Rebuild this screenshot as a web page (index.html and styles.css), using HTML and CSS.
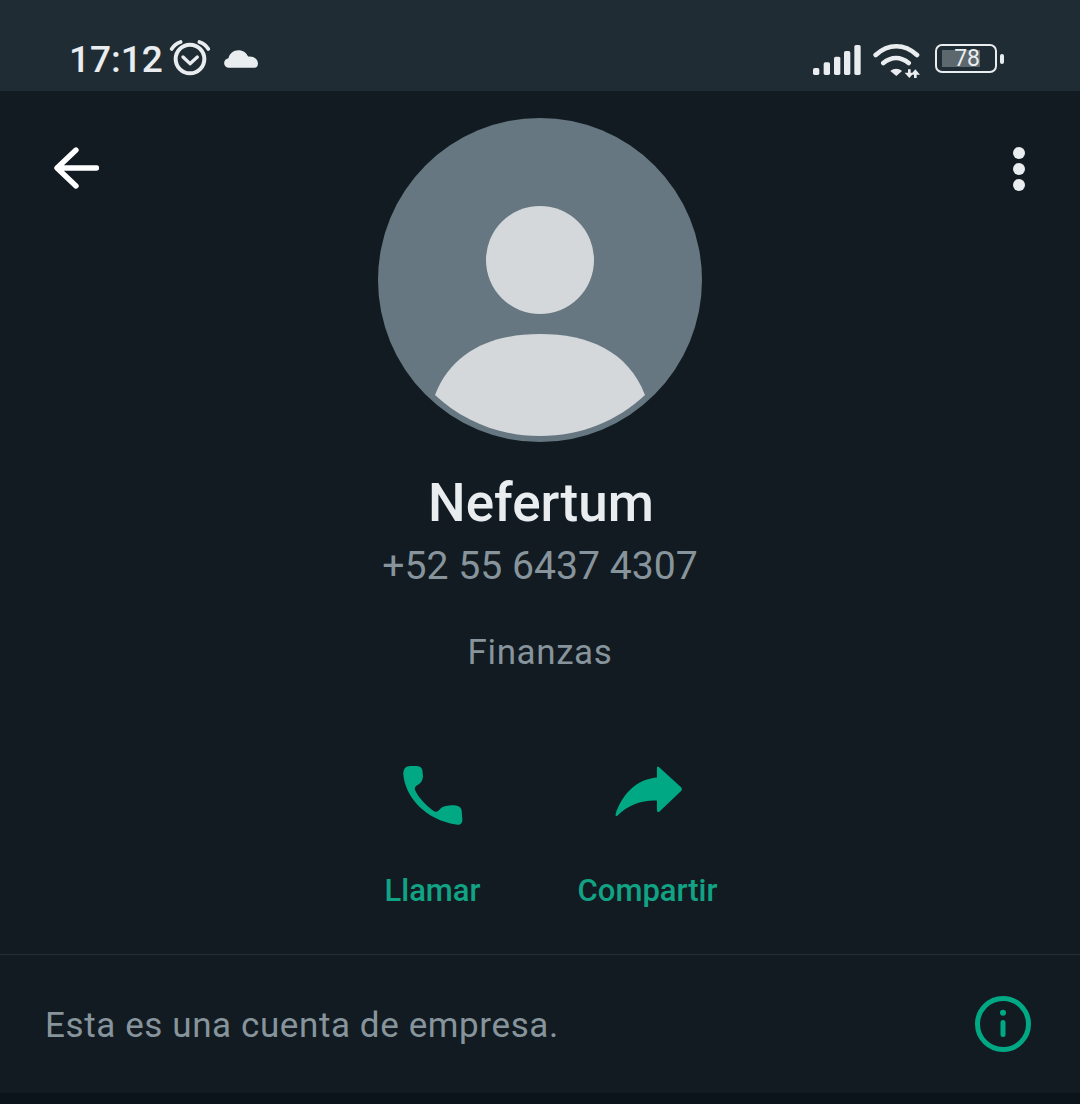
FILE: index.html
```html
<!DOCTYPE html>
<html lang="es">
<head>
  <meta charset="UTF-8" />
  <meta name="viewport" content="width=device-width, initial-scale=1.0"/>
  <title>Nefertum</title>
  <link rel="stylesheet" href="styles.css">
</head>
<body>

  <div class="status-bar">
    <div class="status-left">
      <span class="clock">17:12</span>
      <svg class="alarm" width="42" height="40" viewBox="385 58 126 120">
        <circle cx="448" cy="118" r="43" fill="none" stroke="#e9edef" stroke-width="12"/>
        <path d="M427 112l21 20 22-20" fill="none" stroke="#e9edef" stroke-width="10" stroke-linecap="round" stroke-linejoin="round"/>
        <path d="M393 88c6-10 15-17 27-21M476 67c12 4 21 11 27 21" fill="none" stroke="#e9edef" stroke-width="11" stroke-linecap="round"/>
      </svg>
      <svg class="cloud" width="34" height="20" viewBox="553 86 100 56">
        <path d="M568 140c-18 0-20-25-2-28 3-15 16-25 32-24 13 1 22 9 26 19 15-2 28 6 29 20 0 8-4 13-11 13z" fill="#e9edef"/>
      </svg>
    </div>
    <div class="status-right">
      <svg class="signal" width="50" height="32" viewBox="38 70 150 96">
        <rect x="41" y="142" width="19" height="21" rx="5" fill="#e9edef"/>
        <rect x="73" y="125" width="19" height="38" rx="5" fill="#e9edef"/>
        <rect x="104" y="108" width="19" height="55" rx="5" fill="#e9edef"/>
        <rect x="134" y="91" width="19" height="72" rx="5" fill="#e9edef"/>
        <rect x="165" y="73" width="19" height="90" rx="5" fill="#e9edef"/>
      </svg>
      <svg class="wifi" width="48" height="36" viewBox="218 64 144 108">
        <path d="M229 103c38-35 86-35 124 0M252 127c24-20 52-20 76 0" fill="none" stroke="#e9edef" stroke-width="14" stroke-linecap="round"/>
        <path d="M273 151c11-9 24-9 35 0l-17 15z" fill="#e9edef"/>
        <path d="M330 146v16M348 156v16" stroke="#e9edef" stroke-width="8"/>
        <path d="M316 156h28l-14 16zM334 162l14-16 14 16z" fill="#e9edef"/>
      </svg>
      <div class="battery">
        <div class="battery-body"><span>78</span></div>
        <div class="battery-cap"></div>
      </div>
    </div>
  </div>

  <div class="profile-head">
    <button class="icon-btn back" aria-label="Volver">
      <svg width="46" height="44" viewBox="0 0 46 44">
        <path d="M43.500 22H5M23 4L4 22l19 18" fill="none" stroke="#fff" stroke-width="5.400" stroke-linecap="round" stroke-linejoin="round"/>
      </svg>
    </button>
    <svg class="avatar" width="324" height="324" viewBox="0 0 324 324">
      <circle cx="162" cy="162" r="162" fill="#667781"/>
      <circle cx="162" cy="142" r="54" fill="#d4d8db"/>
      <path d="M57 277c17-44 57-61 105-61s88 17 105 61c-28 26-64 41-105 41s-77-15-105-41z" fill="#d4d8db"/>
    </svg>
    <button class="icon-btn more" aria-label="Más opciones">
      <span></span><span></span><span></span>
    </button>
  </div>

  <div class="info">
    <h1>Nefertum</h1>
    <div class="phone">+52 55 6437 4307</div>
    <div class="category">Finanzas</div>
  </div>

  <div class="actions">
    <div class="action">
      <svg class="call-icon" width="64" height="64" viewBox="95 72 192 192">
        <path d="M120 78c-14 0-22 10-21 26 5 61 61 136 163 150 10 1 15-7 14-18l-2-24c-1-10-10-15-22-16-16-1-30 1-40 8-7 10-15 14-22 9-18-13-42-35-55-61-4-8 0-14 8-18 9-5 15-14 15-26l-2-18c-2-8-8-12-18-12z" fill="#00a884"/>
      </svg>
      <span>Llamar</span>
    </div>
    <div class="action">
      <svg width="70" height="64" viewBox="725 72 212 192">
        <path d="M864 80l68 62q4 6 0 10l-66 63q-8 5-8-5v-28c-43-2-88 13-120 46q-7 4-5-6c17-52 57-104 125-110v-28q0-8 6-4z" fill="#00a884"/>
      </svg>
      <span>Compartir</span>
    </div>
  </div>

  <div class="business">
    <span>Esta es una cuenta de empresa.</span>
    <svg width="56" height="56" viewBox="0 0 56 56">
      <circle cx="28" cy="28" r="25.500" fill="none" stroke="#00a884" stroke-width="5"/>
      <circle cx="28" cy="16.700" r="3" fill="#00a884"/>
      <path d="M28 26.500v12" stroke="#00a884" stroke-width="5" stroke-linecap="round"/>
    </svg>
  </div>

  <div class="bottom-strip"></div>

</body>
</html>
```

FILE: styles.css
```css
body {
  font-family: Roboto, "Noto Sans", sans-serif;
  margin: 0;
  height: 1104px;
  overflow: hidden;
  background-color: #111b21;
  color: #e9edef;
}

.status-bar {
  height: 91px;
  padding: 0 76px 0 69px;
  box-sizing: border-box;
  background-color: #202c33;
  display: flex;
  justify-content: space-between;
  align-items: center;
}

.status-left,
.status-right {
  display: flex;
  align-items: center;
  padding-top: 29px;
}

.clock {
  font-size: 37px;
  line-height: 40px;
  font-weight: 500;
}

.alarm {
  margin-left: 6px;
  margin-top: -3px;
}

.cloud {
  margin-left: 13px;
  margin-top: -3px;
}

.signal {
  margin-top: -1px;
}

.wifi {
  margin-left: 10px;
}

.battery {
  display: flex;
  align-items: center;
  margin-left: 15px;
  margin-top: -3px;
}

.battery-body {
  width: 62px;
  height: 29px;
  box-sizing: border-box;
  border: 2.5px solid #e9edef;
  border-radius: 7px;
  padding-left: 5px;
  display: flex;
  align-items: center;
}

.battery-body span {
  display: block;
  width: 38px;
  height: 17px;
  line-height: 17px;
  background-color: #5d676e;
  font-size: 23px;
  text-align: right;
}

.battery-cap {
  width: 4px;
  height: 10px;
  margin-left: 3px;
  background-color: #e9edef;
  border-radius: 2px;
}

.profile-head {
  display: grid;
  grid-template-columns: 1fr 324px 1fr;
  padding-top: 27px;
}

.icon-btn {
  background: none;
  border: none;
  padding: 0;
}

.back {
  justify-self: start;
  align-self: start;
  margin: 28px 0 0 53px;
  height: 44px;
}

.avatar {
  display: block;
}

.more {
  justify-self: end;
  align-self: start;
  margin: 29px 55px 0 0;
  display: flex;
  flex-direction: column;
  gap: 4px;
}

.more span {
  display: block;
  width: 12px;
  height: 12px;
  border-radius: 50%;
  background-color: #e9edef;
}

.info {
  text-align: center;
  margin-top: 28px;
}

h1 {
  margin: 0;
  padding-left: 2px;
  font-size: 53px;
  line-height: 66px;
  font-weight: 500;
}

.phone {
  font-size: 39.200px;
  line-height: 46px;
  color: #87949c;
  margin-top: 7px;
}

.category {
  font-size: 35px;
  line-height: 40px;
  letter-spacing: 0.6px;
  color: #87949c;
  margin-top: 44px;
}

.actions {
  display: grid;
  grid-template-columns: 215px 215px;
  justify-content: center;
  margin-top: 91px;
  height: 190px;
  border-bottom: 1px solid #222d34;
}

.action {
  display: flex;
  flex-direction: column;
  align-items: center;
  color: #12a284;
  font-size: 31px;
  font-weight: 500;
}

.action svg {
  display: block;
  margin-bottom: 44px;
}

.action .call-icon {
  margin-left: 2px;
}

.business {
  height: 138px;
  padding: 0 49px 0 45px;
  display: flex;
  justify-content: space-between;
  align-items: center;
  font-size: 35px;
  letter-spacing: 0.6px;
  color: #87949c;
}

.business span {
  padding-top: 3px;
}

.bottom-strip {
  height: 11px;
  background-color: #0b141a;
}
```
